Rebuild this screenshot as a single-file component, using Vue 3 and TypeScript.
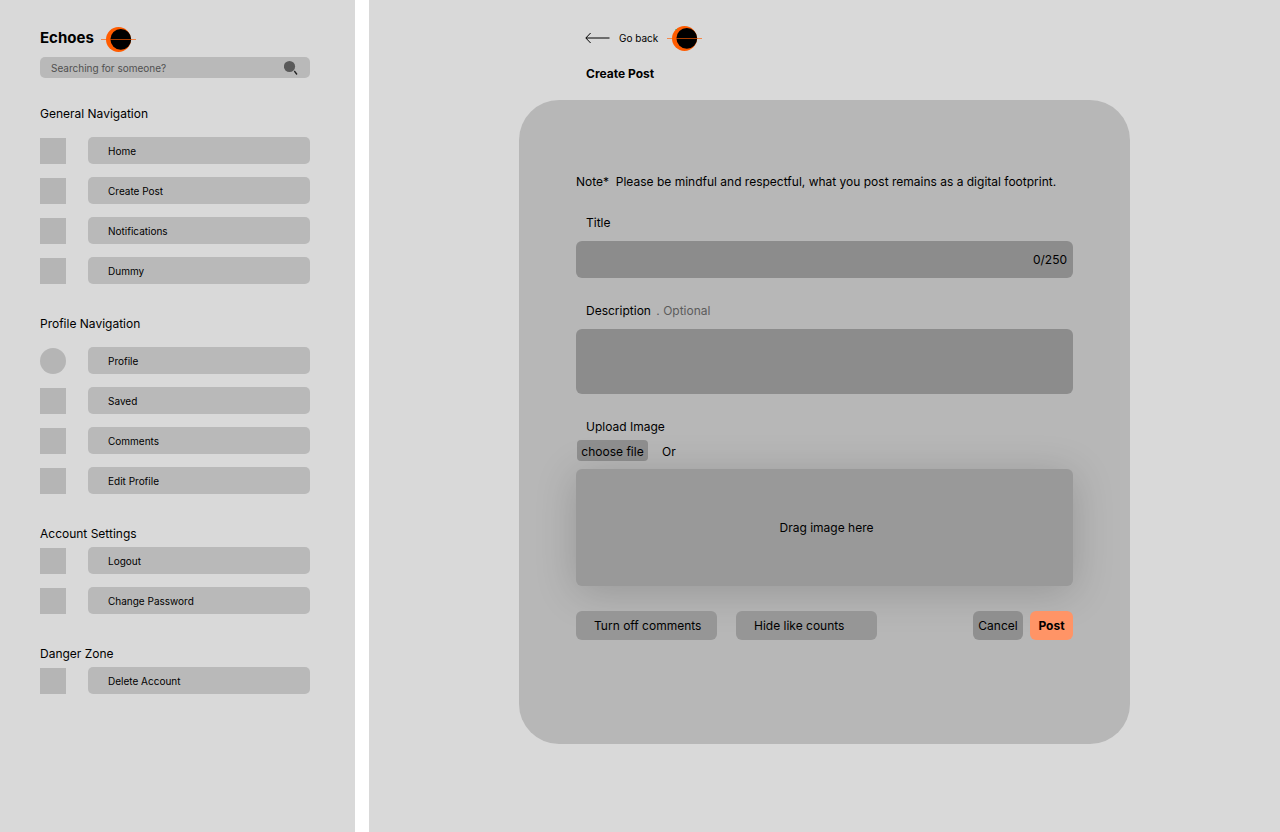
<script setup lang="ts">
import { ref } from 'vue'

interface NavItem {
  label: string
  round?: boolean
}

interface NavSection {
  title: string
  items: NavItem[]
  tight?: boolean
}

const sections: NavSection[] = [
  {
    title: 'General Navigation',
    items: [{ label: 'Home' }, { label: 'Create Post' }, { label: 'Notifications' }, { label: 'Dummy' }],
  },
  {
    title: 'Profile Navigation',
    items: [{ label: 'Profile', round: true }, { label: 'Saved' }, { label: 'Comments' }, { label: 'Edit Profile' }],
  },
  { title: 'Account Settings', items: [{ label: 'Logout' }, { label: 'Change Password' }], tight: true },
  { title: 'Danger Zone', items: [{ label: 'Delete Account' }], tight: true },
]

const maxTitle = 250
const search = ref('')
const title = ref('')
const description = ref('')
const commentsOff = ref(false)
const likesHidden = ref(false)
const fileInput = ref<HTMLInputElement | null>(null)

function chooseFile(): void {
  fileInput.value?.click()
}
</script>

<template>
  <div class="page">
    <aside class="sidebar">
      <div class="brand">
        <h1>Echoes</h1>
        <svg class="logo" viewBox="0 0 35 26" aria-hidden="true">
          <circle cx="17.5" cy="13.5" r="12.5" fill="#ff5c00" />
          <circle cx="19.8" cy="13.3" r="10.4" fill="#000" />
          <path d="M0 13.5H35" stroke="#ff5c00" stroke-opacity=".65" />
        </svg>
      </div>

      <form class="search" role="search" @submit.prevent>
        <input v-model="search" type="search" placeholder="Searching for someone?" aria-label="Search for someone" />
        <button type="submit" aria-label="Search">
          <svg viewBox="0 0 14 15" aria-hidden="true">
            <circle cx="5.5" cy="6.5" r="5.6" fill="#5a5a5a" />
            <path d="M10.3 11L13 14.5" stroke="#222" stroke-width="1.3" />
          </svg>
        </button>
      </form>

      <nav>
        <section v-for="section in sections" :key="section.title" :class="{ tight: section.tight }">
          <h2>{{ section.title }}</h2>
          <ul>
            <li v-for="item in section.items" :key="item.label">
              <span class="thumb" :class="{ round: item.round }"></span>
              <a href="#">{{ item.label }}</a>
            </li>
          </ul>
        </section>
      </nav>
    </aside>

    <main>
      <div class="content">
        <header>
          <a class="back" href="#">
            <svg class="arrow" viewBox="0 0 25 12" aria-hidden="true">
              <path d="M24.5 6H1M5.6 1L.8 6L5.6 11" fill="none" stroke="#000" />
            </svg>
            Go back
          </a>
          <svg class="logo" viewBox="0 0 35 26" aria-hidden="true">
            <circle cx="17.5" cy="13.5" r="12.5" fill="#ff5c00" />
            <circle cx="19.8" cy="13.3" r="10.4" fill="#000" />
            <path d="M0 13.5H35" stroke="#ff5c00" stroke-opacity=".65" />
            <circle cx="9" cy="4.5" r=".6" fill="#14ae5c" />
          </svg>
        </header>
        <h2 class="heading">Create Post</h2>

        <form class="card" @submit.prevent>
          <p class="note">Note*&nbsp; Please be mindful and respectful, what you post remains as a digital footprint.</p>

          <label class="caption" for="title">Title</label>
          <div class="field">
            <input id="title" v-model="title" type="text" :maxlength="maxTitle" />
            <output for="title">{{ title.length }}/{{ maxTitle }}</output>
          </div>

          <label class="caption" for="description">Description <span class="optional">. Optional</span></label>
          <textarea id="description" v-model="description"></textarea>

          <label class="caption upload" for="image">Upload Image</label>
          <div class="choose">
            <button type="button" @click="chooseFile">choose file</button>
            <span>Or</span>
            <input id="image" ref="fileInput" type="file" accept="image/*" hidden />
          </div>
          <div class="drop" @dragover.prevent @drop.prevent>Drag image here</div>

          <div class="actions">
            <button class="toggle" type="button" :aria-pressed="commentsOff" @click="commentsOff = !commentsOff">
              Turn off comments
            </button>
            <button class="toggle" type="button" :aria-pressed="likesHidden" @click="likesHidden = !likesHidden">
              Hide like counts
            </button>
            <div class="finish">
              <button class="cancel" type="button">Cancel</button>
              <button class="post" type="submit">Post</button>
            </div>
          </div>
        </form>
      </div>
    </main>
  </div>
</template>

<style>
body {
  background: #fff;
}
</style>

<style scoped>
.page {
  display: flex;
  gap: 14px;
  min-height: 100vh;
  font: 12px/16px Inter, sans-serif;
  color: #000;
}

.page *,
.page {
  box-sizing: border-box;
}

h1,
h2,
p,
ul {
  margin: 0;
  padding: 0;
  font-size: inherit;
  font-weight: 400;
  list-style: none;
}

a {
  color: inherit;
  text-decoration: none;
}

button,
input,
textarea {
  margin: 0;
  padding: 0;
  border: 0;
  font: inherit;
  color: inherit;
}

button {
  cursor: pointer;
}

.sidebar {
  flex: 0 0 355px;
  padding: 26px 45px 40px 40px;
  background: #d9d9d9;
}

.brand {
  display: flex;
  align-items: center;
  gap: 7px;
}

.brand h1 {
  font-size: 15px;
  line-height: 24px;
  font-weight: 700;
  padding-bottom: 2px;
}

.logo {
  display: block;
  width: 35px;
  height: 26px;
}

.search {
  display: flex;
  align-items: center;
  height: 21px;
  margin: 5px 0 28px;
  padding: 0 12px 0 11px;
  border-radius: 5px;
  background: #b9b9b9;
}

.search input {
  flex: 1;
  min-width: 0;
  height: 21px;
  background: none;
  font-size: 10px;
  outline: none;
  appearance: none;
}

.search input::placeholder {
  color: #505050;
  opacity: 1;
}

.search button {
  background: none;
}

.search svg {
  display: block;
  width: 14px;
  height: 15px;
}

nav {
  display: grid;
  gap: 32px;
}

nav section {
  display: grid;
  gap: 15px;
}

nav section.tight {
  gap: 5px;
}

nav ul {
  display: grid;
  gap: 13px;
}

nav li {
  display: flex;
  align-items: flex-end;
  gap: 22px;
}

.thumb {
  width: 26px;
  height: 26px;
  background: #b5b5b5;
}

.thumb.round {
  border-radius: 50%;
}

nav a {
  flex: 1;
  height: 27px;
  padding: 1px 20px 0;
  border-radius: 5px;
  background: #b9b9b9;
  font-size: 10px;
  line-height: 27px;
}

main {
  flex: 1;
  padding: 25px 24px 40px;
  background: #d9d9d9;
}

.content {
  max-width: 611px;
  margin: 0 auto;
}

header {
  display: flex;
  align-items: center;
  gap: 9px;
  padding-left: 66px;
}

.back {
  display: flex;
  align-items: center;
  gap: 9px;
  font-size: 10px;
}

.arrow {
  width: 25px;
  height: 12px;
}

.heading {
  margin: 15px 0 18px;
  padding-left: 67px;
  font-weight: 700;
}

.card {
  display: flex;
  flex-direction: column;
  padding: 74px 57px 104px;
  border-radius: 40px;
  background: #b7b7b7;
}

.note {
  margin-bottom: 25px;
}

.caption {
  margin-bottom: 10px;
  padding-left: 10px;
}

.caption.upload {
  margin-bottom: 5px;
}

.optional {
  margin-left: 2px;
  color: #5c5c5c;
}

.field {
  display: flex;
  align-items: center;
  height: 37px;
  margin-bottom: 25px;
  padding-right: 6px;
  border-radius: 6px;
  background: #8c8c8c;
}

.field input {
  flex: 1;
  min-width: 0;
  height: 37px;
  padding: 0 10px;
  background: none;
  outline: none;
}

textarea {
  height: 65px;
  margin-bottom: 25px;
  padding: 10px;
  border-radius: 6px;
  background: #8c8c8c;
  outline: none;
  resize: none;
}

.choose {
  display: flex;
  align-items: center;
  gap: 14px;
  margin-bottom: 8px;
  padding-left: 1px;
}

.choose button {
  width: 71px;
  height: 21px;
  padding-top: 2px;
  border-radius: 4px;
  background: #8f8f8f;
}

.choose span {
  padding-top: 2px;
}

.drop {
  display: grid;
  place-items: center;
  height: 117px;
  margin-bottom: 25px;
  padding-left: 4px;
  border-radius: 6px;
  background: #999;
  box-shadow: 0 6px 42px rgba(0, 0, 0, 0.18);
}

.actions {
  display: flex;
  gap: 19px;
}

.actions button {
  height: 29px;
  border-radius: 6px;
  background: #969696;
}

.actions .toggle {
  width: 141px;
  padding-left: 18px;
  text-align: left;
  white-space: nowrap;
}

.finish {
  display: flex;
  gap: 7px;
  margin-left: auto;
}

.finish .cancel {
  width: 50px;
  background: #8f8f8f;
}

.finish .post {
  width: 43px;
  background: #ff9466;
  font-weight: 700;
}
</style>
